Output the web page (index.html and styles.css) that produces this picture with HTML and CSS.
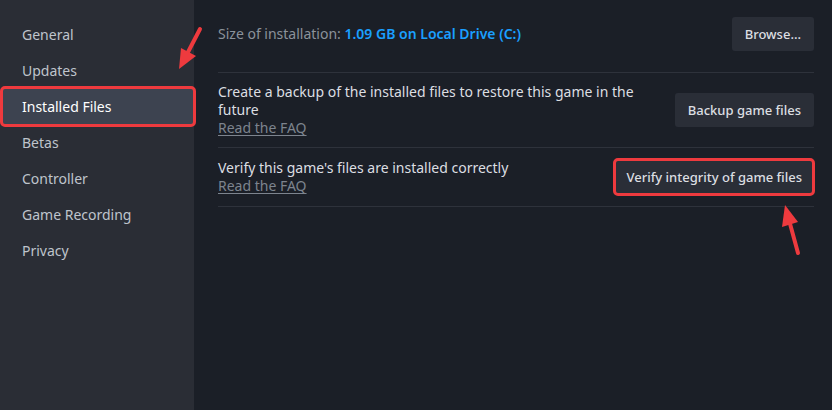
FILE: index.html
```html
<!DOCTYPE html>
<html>
<head>
<meta charset="utf-8">
<link rel="stylesheet" href="styles.css">
</head>
<body>
<div class="app">
  <nav class="sidebar">
    <div class="nav-item">General</div>
    <div class="nav-item">Updates</div>
    <div class="nav-item selected">Installed Files</div>
    <div class="nav-item">Betas</div>
    <div class="nav-item">Controller</div>
    <div class="nav-item">Game Recording</div>
    <div class="nav-item">Privacy</div>
  </nav>
  <main class="content">
    <div class="row row-first">
      <div class="text">
        <span class="label">Size of installation:</span> <span class="value">1.09 GB on Local Drive (C:)</span>
      </div>
      <button class="btn">Browse...</button>
    </div>
    <div class="row">
      <div class="text">
        <div class="desc">Create a backup of the installed files to restore this game in the future</div>
        <a class="faq">Read the FAQ</a>
      </div>
      <button class="btn">Backup game files</button>
    </div>
    <div class="row">
      <div class="text">
        <div class="desc">Verify this game's files are installed correctly</div>
        <a class="faq">Read the FAQ</a>
      </div>
      <button class="btn btn-marked">Verify integrity of game files</button>
    </div>
  </main>
  <svg class="arrows" width="832" height="410" viewBox="0 0 832 410">
    <line x1="200" y1="29" x2="186" y2="56" stroke="#ee3a3e" stroke-width="4" stroke-linecap="round"/>
    <polygon points="179,69 181,48 196,56" fill="#ee3a3e"/>
    <line x1="798" y1="253" x2="789" y2="220" stroke="#ee3a3e" stroke-width="4" stroke-linecap="round"/>
    <polygon points="785,205 782,227 798,222" fill="#ee3a3e"/>
  </svg>
</div>
</body>
</html>
```
FILE: styles.css
```css
html, body {
  margin: 0;
  padding: 0;
  background: #1b1f27;
}
.app {
  position: relative;
  display: flex;
  width: 832px;
  height: 410px;
  font-family: "Noto Sans", "Open Sans", sans-serif;
  font-size: 14px;
  overflow: hidden;
}
.sidebar {
  width: 194px;
  flex: none;
  background: #2a2d35;
  padding-top: 17px;
  box-sizing: border-box;
}
.nav-item {
  height: 36px;
  line-height: 36px;
  padding-left: 22px;
  color: #bfc4cc;
  font-size: 14px;
}
.nav-item.selected {
  position: relative;
  width: 196px;
  box-sizing: border-box;
  height: 41px;
  line-height: 35px;
  margin: -3px 0 -2px 0;
  padding-left: 19px;
  background: #3d4350;
  border: 3px solid #ee3a3e;
  border-radius: 5px;
  color: #ffffff;
}
.content {
  flex: 1;
  padding: 0 18px 0 24px;
}
.row {
  display: flex;
  align-items: center;
  justify-content: space-between;
  gap: 20px;
  padding: 10px 0;
  border-bottom: 1px solid #2e323b;
}
.row-first {
  padding: 17px 0 21px;
}
.text {
  line-height: 18px;
  max-width: 430px;
}
.label {
  color: #8b929b;
}
.value {
  color: #1a9fff;
  font-weight: 600;
}
.desc {
  color: #dcdee2;
}
.faq {
  color: #7d848e;
  text-decoration: underline;
  text-underline-offset: 2px;
}
.btn {
  flex: none;
  height: 34px;
  padding: 0 13px;
  border: none;
  border-radius: 3px;
  background: #2a2e37;
  color: #dcdee2;
  font-family: "Noto Sans", "Open Sans", sans-serif;
  font-size: 13px;
  font-weight: 500;
}
.btn-marked {
  height: 38px;
  padding: 0 10px;
  border: 3px solid #ee3a3e;
  border-radius: 5px;
  margin-right: -1px;
}
.arrows {
  position: absolute;
  left: 0;
  top: 0;
  pointer-events: none;
}
```
